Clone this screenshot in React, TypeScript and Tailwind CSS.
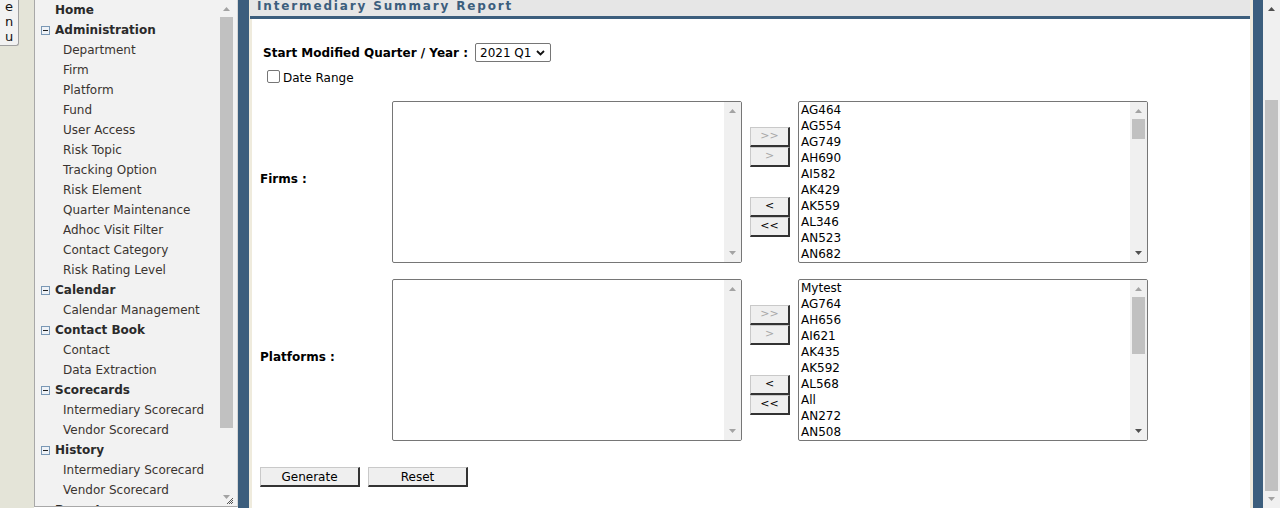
import type { ReactNode } from "react";

const menu: { title: string; items: string[] }[] = [
  {
    title: "Administration",
    items: [
      "Department",
      "Firm",
      "Platform",
      "Fund",
      "User Access",
      "Risk Topic",
      "Tracking Option",
      "Risk Element",
      "Quarter Maintenance",
      "Adhoc Visit Filter",
      "Contact Category",
      "Risk Rating Level",
    ],
  },
  { title: "Calendar", items: ["Calendar Management"] },
  { title: "Contact Book", items: ["Contact", "Data Extraction"] },
  { title: "Scorecards", items: ["Intermediary Scorecard", "Vendor Scorecard"] },
  { title: "History", items: ["Intermediary Scorecard", "Vendor Scorecard"] },
  { title: "Reports", items: [] },
];

const firms = ["AG464", "AG554", "AG749", "AH690", "AI582", "AK429", "AK559", "AL346", "AN523", "AN682"];
const platforms = ["Mytest", "AG764", "AH656", "AI621", "AK435", "AK592", "AL568", "All", "AN272", "AN508"];

function Tri({ up, color }: { up?: boolean; color: string }) {
  return (
    <svg width="7" height="4" viewBox="0 0 7 4" className="block">
      <path d={up ? "M3.5 0L7 4H0z" : "M0 0H7L3.5 4z"} fill={color} />
    </svg>
  );
}

function Minus() {
  return (
    <span className="w-[9px] h-[9px] border border-[#7a98b5] bg-[#eef2f7] flex items-center justify-center mr-[5px]">
      <span className="w-[5px] h-[1px] bg-[#222]" />
    </span>
  );
}

// fake classic scrollbar, thumb optional
function ScrollBar({
  thumbTop,
  thumbHeight,
  downDark,
  className = "",
}: {
  thumbTop?: number;
  thumbHeight?: number;
  downDark?: boolean;
  className?: string;
}) {
  return (
    <div className={"relative w-[17px] bg-[#f0f0f0] " + className}>
      <div className="absolute top-[7px] left-[5px]">
        <Tri up color="#a3a3a3" />
      </div>
      {thumbHeight ? (
        <div
          className="absolute left-[2px] w-[13px] bg-[#c1c1c1]"
          style={{ top: thumbTop, height: thumbHeight }}
        />
      ) : null}
      <div className="absolute bottom-[7px] left-[5px]">
        <Tri color={downDark ? "#505050" : "#a3a3a3"} />
      </div>
    </div>
  );
}

function ListBox({ items, thumbTop, thumbHeight }: { items?: string[]; thumbTop?: number; thumbHeight?: number }) {
  return (
    <div className="w-[350px] h-[162px] border border-[#767676] rounded-[2px] bg-white flex overflow-hidden">
      <div className="flex-1 pl-[2px] text-[12px] leading-[16px] text-black">
        {items?.map((it) => (
          <div key={it}>{it}</div>
        ))}
      </div>
      <ScrollBar thumbTop={thumbTop} thumbHeight={thumbHeight} downDark={!!items} />
    </div>
  );
}

function OldButton({ children, disabled, className = "" }: { children: ReactNode; disabled?: boolean; className?: string }) {
  return (
    <div
      className={
        "flex items-center justify-center bg-[#efefef] border-t border-l border-t-[#c9c9c9] border-l-[#c9c9c9] border-r-2 border-b-2 border-r-[#333] border-b-[#333] " +
        (disabled ? "text-[#a8a8a8] " : "text-black ") +
        className
      }
    >
      {children}
    </div>
  );
}

function Mover() {
  return (
    <div className="w-[40px] flex flex-col text-[11px]">
      <OldButton disabled className="h-[20px]">&gt;&gt;</OldButton>
      <OldButton disabled className="h-[20px]">&gt;</OldButton>
      <div className="h-[30px]" />
      <OldButton className="h-[20px]">&lt;</OldButton>
      <OldButton className="h-[20px]">&lt;&lt;</OldButton>
    </div>
  );
}

function PickRow({ label, items, thumbTop, thumbHeight }: { label: string; items: string[]; thumbTop: number; thumbHeight: number }) {
  return (
    <div className="flex items-center pl-[8px]">
      <div className="w-[132px] font-bold text-[12px] pb-[7px]">{label}</div>
      <ListBox />
      <div className="mx-[8px]">
        <Mover />
      </div>
      <ListBox items={items} thumbTop={thumbTop} thumbHeight={thumbHeight} />
    </div>
  );
}

export default function App() {
  return (
    <div className="flex w-[1280px] h-[508px] overflow-hidden bg-white text-[#222] [font-family:'DejaVu_Sans',Verdana,sans-serif]">
      {/* collapsed menu tab */}
      <div className="w-[34px] bg-[#e4e4d8]">
        <div className="w-[19px] h-[47px] bg-[#f2f2f2] border-r border-b border-[#a0a0a0] rounded-br-[3px] flex flex-col items-center text-[13px] leading-[15px] text-[#111] -mt-[1px]">
          <span>e</span>
          <span>n</span>
          <span>u</span>
        </div>
      </div>

      {/* side menu */}
      <div className="w-[204px] h-[507px] flex bg-[#f2f2f2] border-l border-b border-r border-[#a8a8a8] border-r-[#d6d6d6] text-[12px]">
        <div className="flex-1 overflow-hidden pl-[6px]">
          <div className="h-[20px] flex items-center pl-[14px] font-bold text-[#2a2a2a]">Home</div>
          {menu.map((grp) => (
            <div key={grp.title}>
              <div className="h-[20px] flex items-center font-bold text-[#2a2a2a]">
                <Minus />
                {grp.title}
              </div>
              {grp.items.map((it, i) => (
                <div key={it + i} className="h-[20px] flex items-center pl-[22px] text-[#3a3430]">
                  {it}
                </div>
              ))}
            </div>
          ))}
        </div>
        <div className="relative w-[17px] mr-[2px]">
          <ScrollBar thumbTop={17} thumbHeight={411} className="h-full !bg-[#f2f2f2]" />
          <svg width="8" height="8" viewBox="0 0 8 8" className="absolute right-[1px] bottom-[1px]">
            <path d="M7 1L1 7M7 3L3 7M7 5L5 7" stroke="#555" strokeWidth="1" />
          </svg>
        </div>
      </div>

      <div className="w-[11px] bg-[#3c5e7d]" />
      <div className="w-[3px] bg-[#efebdd]" />

      {/* main */}
      <div className="w-[998px] flex flex-col">
        <div className="h-[19px] bg-[#e6e6e6] border-b-[3px] border-[#3c5e7d] pl-[7px] -ml-[2px]">
          <div className="font-bold text-[12px] leading-[12px] tracking-[1.85px] text-[#3c5e7d] pt-[0px]">
            Intermediary Summary Report
          </div>
        </div>

        <div className="pt-[24px] text-[12px] text-black">
          <div className="flex items-center pl-[11px] h-[19px]">
            <span className="font-bold">Start Modified Quarter / Year :</span>
            <div className="ml-[7px] w-[76px] h-[19px] border border-[#767676] rounded-[2px] flex items-center pl-[4px] pr-[5px] justify-between">
              <span>2021 Q1</span>
              <svg width="9" height="6" viewBox="0 0 9 6">
                <path d="M1 1L4.5 4.5L8 1" stroke="#111" strokeWidth="1.8" fill="none" />
              </svg>
            </div>
          </div>

          <div className="flex items-center pl-[15px] mt-[7px] h-[14px]">
            <span className="w-[13px] h-[13px] border border-[#767676] rounded-[2px] bg-white" />
            <span className="ml-[3px] pt-[3px]">Date Range</span>
          </div>

          <div className="mt-[18px]">
            <PickRow label="Firms :" items={firms} thumbTop={17} thumbHeight={20} />
          </div>
          <div className="mt-[16px]">
            <PickRow label="Platforms :" items={platforms} thumbTop={17} thumbHeight={57} />
          </div>

          <div className="flex gap-[8px] pl-[8px] mt-[26px]">
            <OldButton className="w-[100px] h-[20px]">Generate</OldButton>
            <OldButton className="w-[100px] h-[20px]">Reset</OldButton>
          </div>
        </div>
      </div>

      <div className="w-[3px] bg-[#efebdd]" />
      <div className="w-[10px] bg-[#3c5e7d]" />

      {/* page scrollbar */}
      <div className="relative w-[17px] bg-[#f0f0f0]">
        <div className="absolute top-[7px] left-[5px]">
          <Tri up color="#505050" />
        </div>
        <div className="absolute left-[2px] w-[13px] top-[100px] h-[391px] bg-[#c1c1c1]" />
        <div className="absolute bottom-[7px] left-[5px]">
          <Tri color="#a3a3a3" />
        </div>
      </div>
    </div>
  );
}
